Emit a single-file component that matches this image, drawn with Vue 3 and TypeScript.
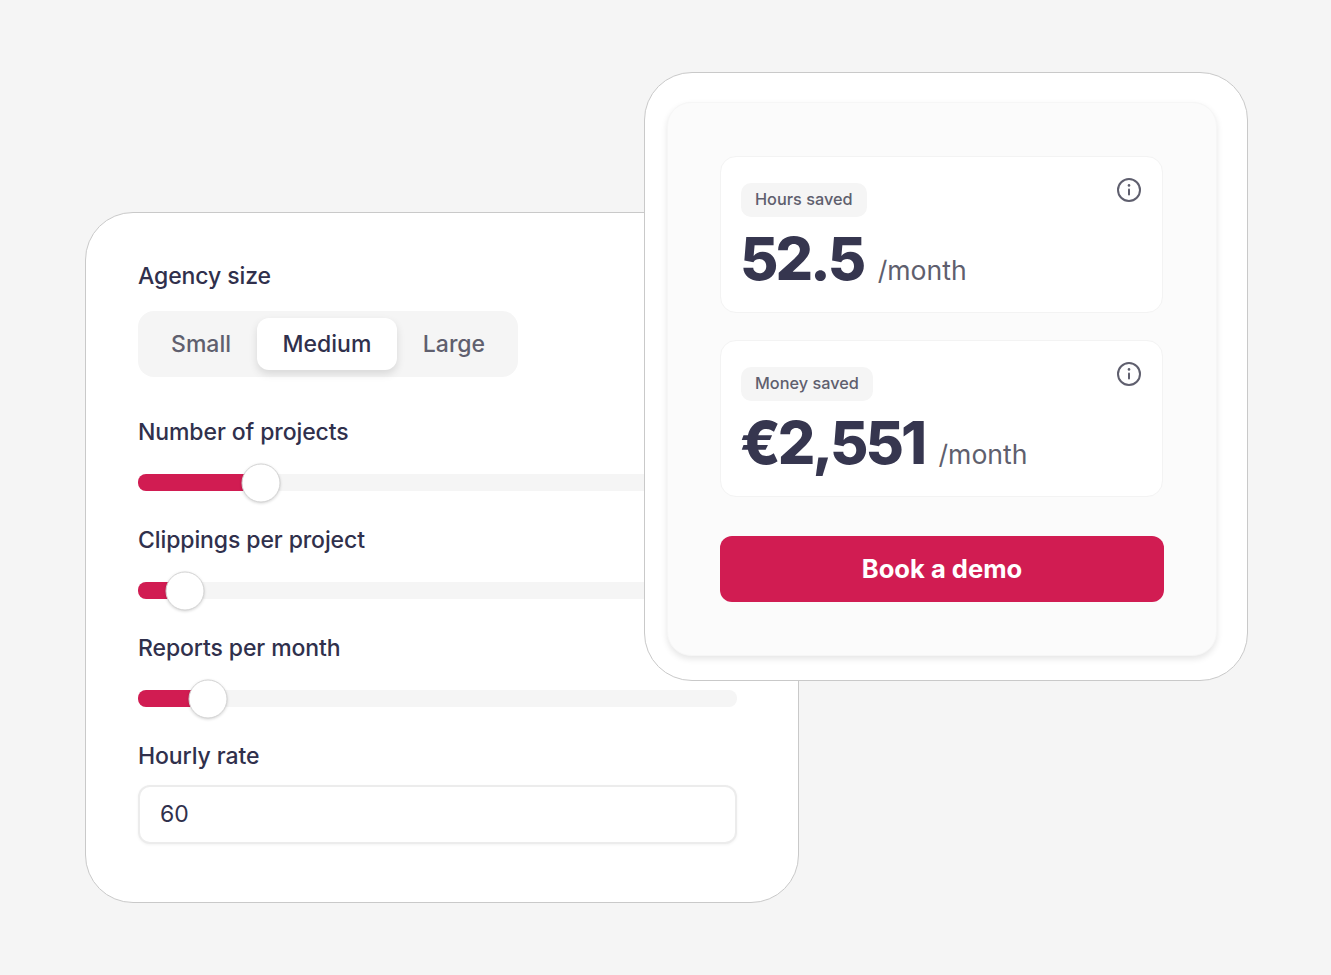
<script setup lang="ts">
const sizes = ["Small", "Medium", "Large"];
const active = "Medium";

const sliders = [
  { label: "Number of projects", thumb: 123 },
  { label: "Clippings per project", thumb: 47 },
  { label: "Reports per month", thumb: 70 },
];

const stats = [
  { tag: "Hours saved", value: "52.5" },
  { tag: "Money saved", value: "€2,551" },
];
</script>

<template>
  <div class="page">
    <section class="inputs">
      <h3 class="label first">Agency size</h3>
      <div class="segments">
        <span
          v-for="size in sizes"
          :key="size"
          class="segment"
          :class="{ 'segment-active': size === active }"
          >{{ size }}</span
        >
      </div>

      <div v-for="s in sliders" :key="s.label" class="slider-row">
        <h3 class="label">{{ s.label }}</h3>
        <div class="track">
          <div class="fill" :style="{ width: s.thumb + 'px' }"></div>
          <div class="thumb" :style="{ left: s.thumb + 'px' }"></div>
        </div>
      </div>

      <h3 class="label">Hourly rate</h3>
      <div class="rate">60</div>
    </section>

    <section class="results">
      <div class="panel">
        <div v-for="stat in stats" :key="stat.tag" class="stat">
          <svg class="info" viewBox="0 0 24 24" fill="none">
            <circle cx="12" cy="12" r="11" stroke="#5f5f6e" stroke-width="2" />
            <rect x="11" y="10.6" width="2" height="7" rx="1" fill="#5f5f6e" />
            <circle cx="12" cy="7.4" r="1.3" fill="#5f5f6e" />
          </svg>
          <span class="tag">{{ stat.tag }}</span>
          <div class="figure">
            <span class="value">{{ stat.value }}</span>
            <span class="unit">/month</span>
          </div>
        </div>
        <button class="demo">Book a demo</button>
      </div>
    </section>
  </div>
</template>

<style>
html,
body {
  margin: 0;
  background: #f5f5f5;
}
</style>

<style scoped>
.page {
  position: relative;
  height: 975px;
  padding: 212px 0 0 85px;
  box-sizing: border-box;
  font-family: Inter, "Liberation Sans", sans-serif;
  color: #30304c;
  overflow: hidden;
}

.inputs {
  width: 714px;
  height: 691px;
  box-sizing: border-box;
  padding: 48px 61px 0 52px;
  background: #fff;
  border: 1px solid #c9c9c9;
  border-radius: 48px;
}

.label {
  margin: 0;
  height: 30px;
  font-size: 23px;
  line-height: 30px;
  font-weight: 500;
  letter-spacing: -0.1px;
}

.segments {
  display: flex;
  align-items: center;
  width: 380px;
  height: 66px;
  margin-top: 20px;
  padding: 0 7px;
  box-sizing: border-box;
  background: #f5f5f5;
  border-radius: 16px;
}

.segment {
  display: flex;
  align-items: center;
  justify-content: center;
  height: 52px;
  width: 112px;
  box-sizing: border-box;
  font-size: 23px;
  font-weight: 500;
  color: #5f5f6e;
  border-radius: 12px;
}

.segment:last-child {
  padding-left: 2px;
}

.segment-active {
  width: 140px;
  background: #fff;
  color: #30304c;
  box-shadow: 0 4px 8px rgba(0, 0, 0, 0.12);
}

.slider-row {
  height: 108px;
}

.segments + .slider-row {
  margin-top: 40px;
}

.track {
  position: relative;
  height: 17px;
  width: 599px;
  margin-top: 27px;
  background: #f5f5f5;
  border-radius: 8px;
}

.fill {
  height: 100%;
  background: #d11c52;
  border-radius: 8px 0 0 8px;
}

.thumb {
  position: absolute;
  top: 50%;
  width: 39px;
  height: 39px;
  box-sizing: border-box;
  transform: translate(-50%, -50%);
  background: #fff;
  border: 1px solid #d4d4d4;
  border-radius: 50%;
  box-shadow: 0 1px 3px rgba(0, 0, 0, 0.16);
}

.rate {
  display: flex;
  align-items: center;
  width: 599px;
  height: 59px;
  margin-top: 14px;
  padding: 0 20px 1px;
  box-sizing: border-box;
  font-size: 23px;
  background: #fff;
  border: 2px solid #ececec;
  border-radius: 12px;
  box-shadow: 0 1px 3px rgba(0, 0, 0, 0.05);
}

.results {
  position: absolute;
  left: 644px;
  top: 72px;
  width: 604px;
  height: 609px;
  box-sizing: border-box;
  padding: 29px 30px 24px 22px;
  background: #fff;
  border: 1px solid #c9c9c9;
  border-radius: 48px;
}

.panel {
  height: 100%;
  box-sizing: border-box;
  padding: 53px 53px 0 52px;
  background: #fbfbfb;
  border: 1px solid #f6f6f6;
  border-radius: 24px;
  box-shadow: 0 3px 6px rgba(0, 0, 0, 0.1);
}

.stat {
  position: relative;
  height: 157px;
  box-sizing: border-box;
  margin-bottom: 27px;
  padding: 26px 20px 0;
  background: #fff;
  border: 1px solid #f3f3f3;
  border-radius: 16px;
}

.info {
  position: absolute;
  top: 21px;
  right: 21px;
  width: 24px;
  height: 24px;
}

.tag {
  display: inline-block;
  height: 34px;
  padding: 0 14px;
  font-size: 16.3px;
  line-height: 32px;
  font-weight: 500;
  color: #5f5f6e;
  background: #f5f5f5;
  border-radius: 10px;
}

.figure {
  display: flex;
  align-items: baseline;
  gap: 14.5px;
  margin-top: 6px;
}

.value {
  margin-left: -1px;
  font-size: 59px;
  line-height: 72px;
  font-weight: 800;
  letter-spacing: -3px;
  color: #36364f;
}

.unit {
  font-size: 26.6px;
  font-weight: 400;
  color: #5f5f6e;
}

.demo {
  display: block;
  width: 444px;
  height: 66px;
  margin: 39px 0 0;
  padding: 0 0 2px;
  border: none;
  border-radius: 12px;
  background: #d11c52;
  color: #fff;
  font-family: inherit;
  font-size: 25.6px;
  font-weight: 700;
}
</style>
